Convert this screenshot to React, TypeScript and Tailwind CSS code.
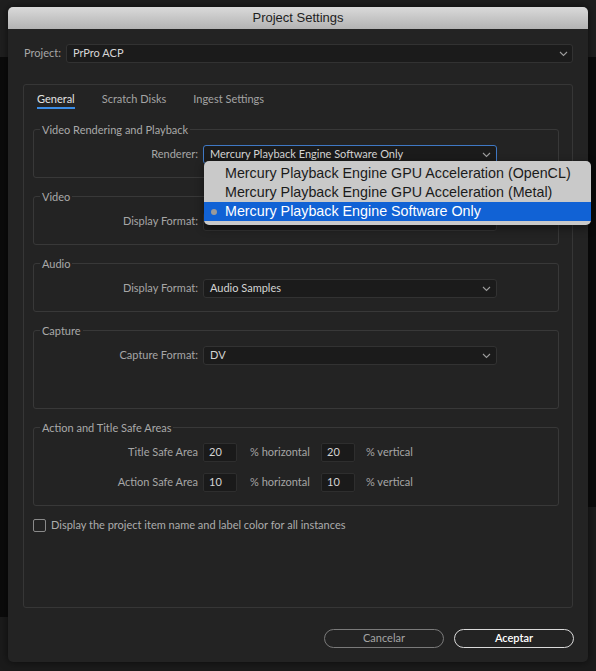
import React from 'react';

const Chevron = () => (
  <svg width="9" height="6" viewBox="0 0 9 6" fill="none" className="shrink-0">
    <path d="M1 1l3.5 3.5L8 1" stroke="#9c9c9c" strokeWidth="1.1" />
  </svg>
);

const Select = ({ value, focused = false }: { value: string; focused?: boolean }) => (
  <div
    className={`flex h-[19px] w-[294px] items-center justify-between rounded-[3px] border bg-[#1b1b1b] pl-[6px] pr-[5px] text-[11px] text-[#d4d4d4] ${
      focused ? 'border-[#3f78c4]' : 'border-[#323232]'
    }`}
  >
    <span>{value}</span>
    <Chevron />
  </div>
);

const Field = ({ value }: { value: string }) => (
  <div className="flex h-[19px] w-[34px] items-center rounded-[2px] border border-[#2e2e2e] bg-[#1a1a1a] pl-[5px] text-[11px] text-[#d4d4d4]">
    {value}
  </div>
);

const Section = ({
  title,
  tall = false,
  children,
}: {
  title: string;
  tall?: boolean;
  children: React.ReactNode;
}) => (
  <fieldset className="rounded-[3px] border border-[#383838]">
    <legend className="ml-[6px] px-[2px] text-[11px] leading-[13px] text-[#a9a9a9]">{title}</legend>
    <div className={tall ? 'h-[71px]' : 'h-[41px]'}>{children}</div>
  </fieldset>
);

const Row = ({ label, children }: { label: string; children: React.ReactNode }) => (
  <div className="flex h-[19px] items-center">
    <div className="w-[164px] text-right text-[11px] text-[#a6a6a6]">{label}</div>
    <div className="relative ml-[5px]">{children}</div>
  </div>
);

const menuItems = [
  'Mercury Playback Engine GPU Acceleration (OpenCL)',
  'Mercury Playback Engine GPU Acceleration (Metal)',
  'Mercury Playback Engine Software Only',
];

const RendererMenu = () => (
  <div className="absolute left-[1px] top-[16px] z-10 w-[387px] rounded-[5px] bg-[#c9c9c9] pb-[4px] pt-[3px] font-['Liberation_Sans',Arial,sans-serif] text-[14.3px] shadow-[0_3px_10px_rgba(0,0,0,0.45)]">
    {menuItems.map((item, i) => {
      const selected = i === menuItems.length - 1;
      return (
        <div
          key={item}
          className={`flex h-[19px] items-center pl-[7px] ${
            selected ? 'bg-[#1162d5] text-white' : 'text-[#1b1b1b]'
          }`}
        >
          <span
            className={`h-[6px] w-[6px] rounded-full ${selected ? 'bg-[#9a9a9a]' : 'bg-transparent'}`}
          />
          <span className="ml-[8px] whitespace-nowrap">{item}</span>
        </div>
      );
    })}
  </div>
);

export default function App() {
  return (
    <div className="relative h-[671px] w-[596px] overflow-hidden bg-[#1b1b1b] font-[Lato,sans-serif]">
      {/* desktop behind the window */}
      <div className="absolute inset-x-0 top-0 h-[57px] bg-[#1f1f1f]" />
      <div className="absolute left-0 top-[57px] h-[560px] w-[8px] bg-[#0b0b0b]" />
      <div className="absolute right-0 top-[57px] h-[450px] w-[8px] bg-[#0b0b0b]" />

      <div className="relative pl-[8px] pt-[7px]">
        <div className="flex h-[655px] w-[580px] flex-col rounded-[5px] bg-[#232323] shadow-[0_0_8px_rgba(0,0,0,0.6)]">
          <div className="flex h-[22px] items-center justify-center rounded-t-[5px] bg-gradient-to-b from-[#dadada] to-[#b3b3b3] font-['Liberation_Sans',Arial,sans-serif] text-[13px] text-[#1e1e1e]">
            Project Settings
          </div>

          <div className="flex flex-col px-[15px]">
            <div className="mt-[15px] flex h-[19px] items-center">
              <span className="ml-[1px] text-[11px] text-[#a6a6a6]">Project:</span>
              <div className="ml-[5px] flex h-[19px] flex-1 items-center justify-between rounded-[3px] border border-[#323232] bg-[#1b1b1b] pl-[6px] pr-[4px] text-[11px] text-[#d6d6d6]">
                <span>PrPro ACP</span>
                <Chevron />
              </div>
            </div>

            <div className="mt-[21px] h-[524px] rounded-[3px] border border-[#363636] pl-[9px] pr-[13px]">
              <div className="flex gap-[27px] pl-[4px] pt-[7px] text-[11px] leading-[14px]">
                <div className="border-b-2 border-[#3b8de6] pb-[1px] text-[#e2e2e2]">General</div>
                <div className="pb-[3px] text-[#a4a4a4]">Scratch Disks</div>
                <div className="pb-[3px] text-[#a4a4a4]">Ingest Settings</div>
              </div>

              <div className="mt-[14px] flex flex-col gap-[12px]">
                <Section title="Video Rendering and Playback">
                  <div className="pt-[9px]">
                    <Row label="Renderer:">
                      <Select value="Mercury Playback Engine Software Only" focused />
                      <RendererMenu />
                    </Row>
                  </div>
                </Section>

                <Section title="Video">
                  <div className="pt-[9px]">
                    <Row label="Display Format:">
                      <Select value="" />
                    </Row>
                  </div>
                </Section>

                <Section title="Audio">
                  <div className="pt-[9px]">
                    <Row label="Display Format:">
                      <Select value="Audio Samples" />
                    </Row>
                  </div>
                </Section>

                <Section title="Capture" tall>
                  <div className="pt-[9px]">
                    <Row label="Capture Format:">
                      <Select value="DV" />
                    </Row>
                  </div>
                </Section>

                <Section title="Action and Title Safe Areas" tall>
                  <div className="flex flex-col gap-[11px] pt-[9px]">
                    {[
                      ['Title Safe Area', '20'],
                      ['Action Safe Area', '10'],
                    ].map(([label, v]) => (
                      <Row key={label} label={label}>
                        <div className="flex items-center text-[11px] text-[#a6a6a6]">
                          <Field value={v} />
                          <span className="w-[84px] pl-[13px]">% horizontal</span>
                          <Field value={v} />
                          <span className="pl-[11px]">% vertical</span>
                        </div>
                      </Row>
                    ))}
                  </div>
                </Section>
              </div>

              <div className="mt-[11px] flex items-center">
                <span className="h-[13px] w-[13px] rounded-[2px] border border-[#8a8a8a]" />
                <span className="ml-[5px] text-[11px] text-[#acacac]">
                  Display the project item name and label color for all instances
                </span>
              </div>
            </div>

            <div className="mr-[-1px] mt-[21px] flex justify-end gap-[10px]">
              <button className="flex h-[19px] w-[120px] items-center justify-center rounded-full border border-[#7a7a7a] text-[11px] text-[#a4a4a4]">
                Cancelar
              </button>
              <button className="flex h-[19px] w-[120px] items-center justify-center rounded-full border-[1.5px] border-[#dadada] text-[11px] font-semibold text-white">
                Aceptar
              </button>
            </div>
          </div>
        </div>
      </div>
    </div>
  );
}
